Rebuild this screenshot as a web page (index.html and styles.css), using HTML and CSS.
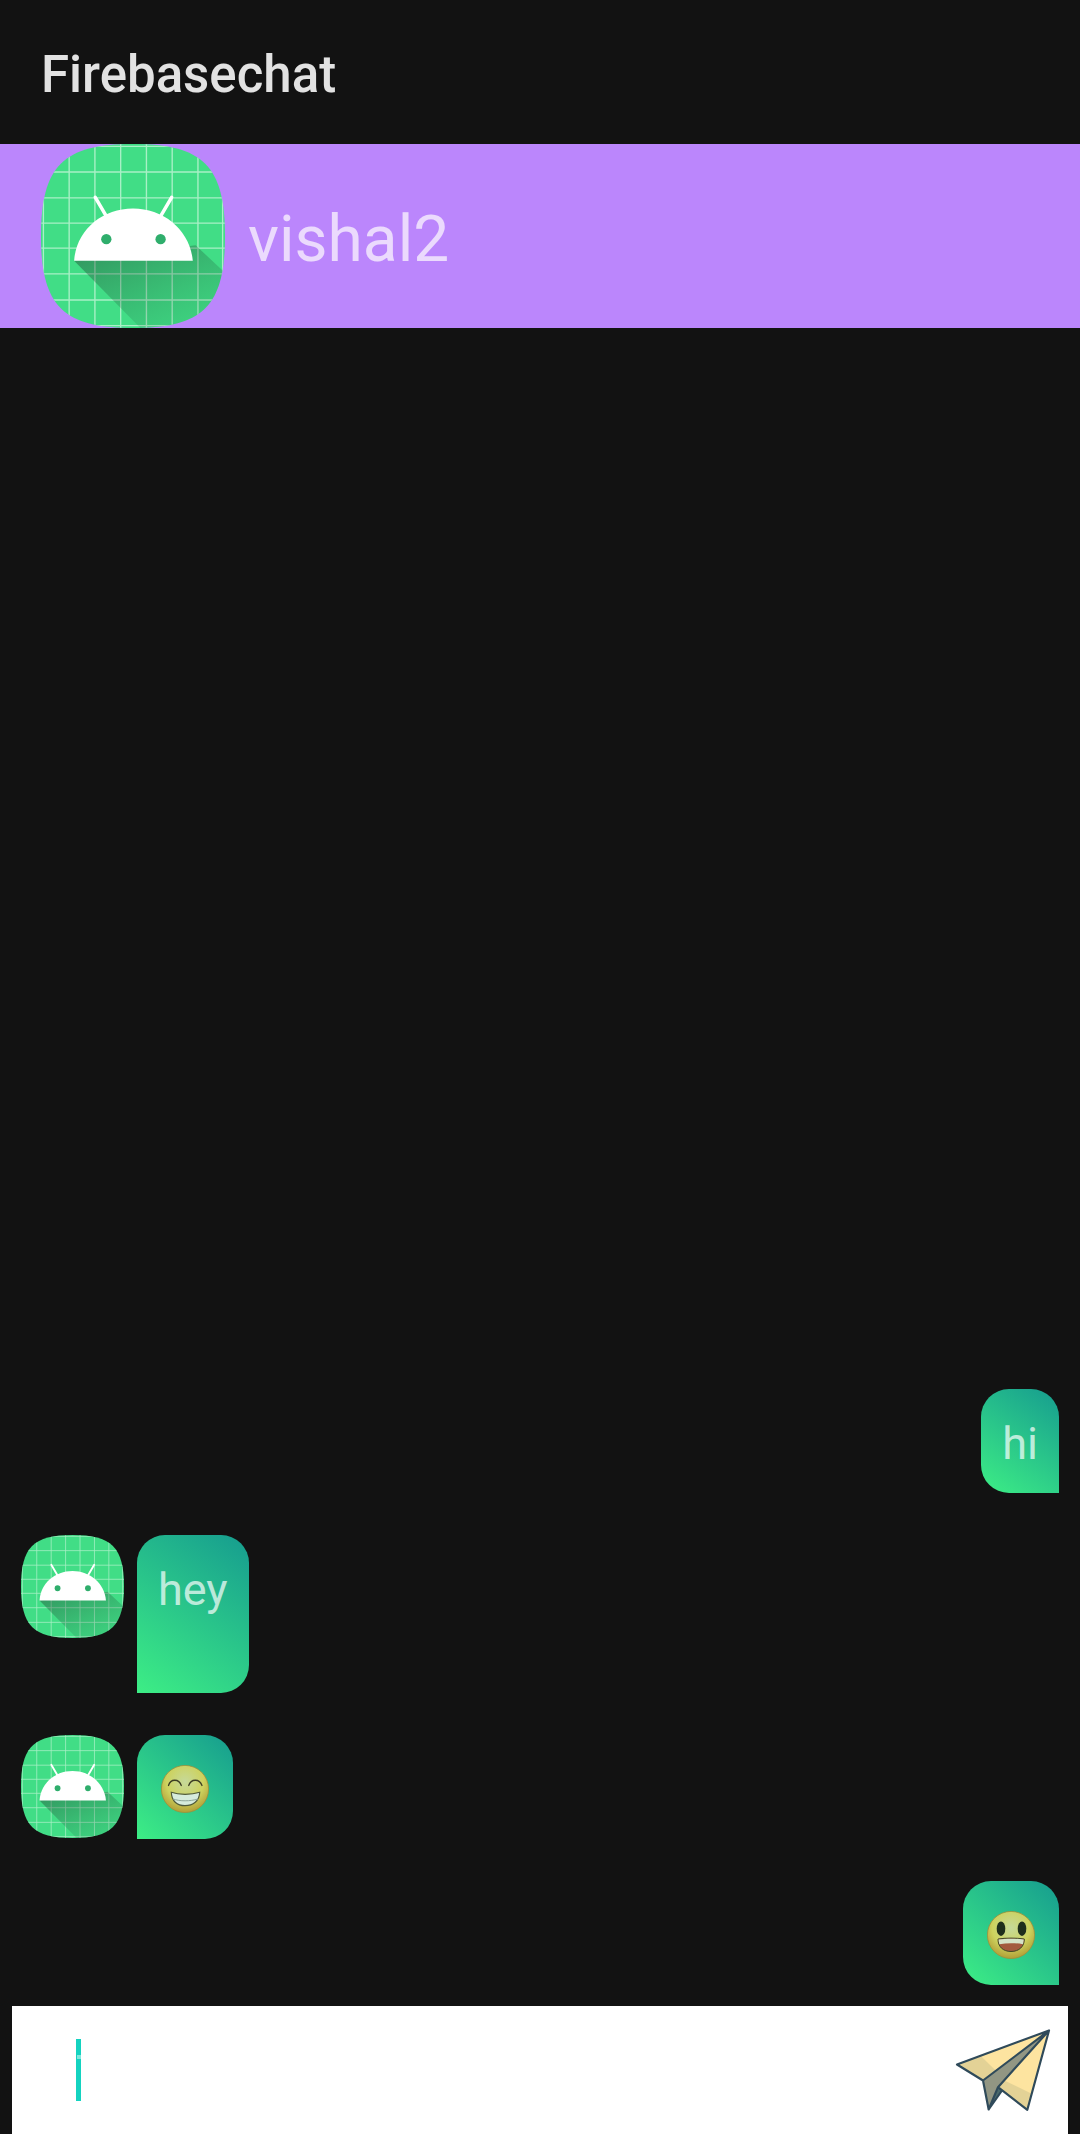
FILE: index.html
```html
<!DOCTYPE html>
<html lang="en">
<head>
<meta charset="utf-8">
<title>Firebasechat</title>
<link rel="stylesheet" href="styles.css">
</head>
<body>
<svg class="defs" width="0" height="0" aria-hidden="true">
  <defs>
    <clipPath id="squircle"><path d="M50 0C88 0 100 12 100 50C100 88 88 100 50 100C12 100 0 88 0 50C0 12 12 0 50 0Z"/></clipPath>
    <linearGradient id="shadow" x1="0.15" y1="0.05" x2="0.85" y2="0.95">
      <stop offset="0" stop-color="#1c2b24" stop-opacity=".38"/>
      <stop offset="1" stop-color="#1c5a3a" stop-opacity=".08"/>
    </linearGradient>
    <radialGradient id="face" cx=".5" cy=".35" r=".66">
      <stop offset="0" stop-color="#c6d99a"/>
      <stop offset=".6" stop-color="#cdd25e"/>
      <stop offset="1" stop-color="#b09c34"/>
    </radialGradient>
    <symbol id="android" viewBox="0 0 100 100">
      <g clip-path="url(#squircle)">
        <rect width="100" height="100" fill="#41dd86"/>
        <g stroke="#a8f0c6" stroke-width=".75" fill="none">
          <path d="M1.3 0V100M15.3 0V100M29.3 0V100M43.3 0V100M57.3 0V100M71.3 0V100M85.3 0V100M98.7 0V100"/>
          <path d="M0 1.3H100M0 15.2H100M0 29.3H100M0 43H100M0 56.6H100M0 70.6H100M0 84.8H100M0 98.7H100"/>
        </g>
        <path d="M18 63.5L54 100H100V70L84 55Z" fill="url(#shadow)"/>
        <path d="M29.5 29L36.5 41M71 29L64 41" stroke="#fff" stroke-width="1.9" stroke-linecap="round"/>
        <path d="M18 63.5C19 47 33 35 50 35C67 35 81 47 82.5 63.5Z" fill="#fff"/>
        <circle cx="35.5" cy="51.7" r="2.8" fill="#2fae6c"/>
        <circle cx="65" cy="51.7" r="2.8" fill="#2fae6c"/>
      </g>
    </symbol>
  </defs>
</svg>

<div class="screen">
  <header class="toolbar">Firebasechat</header>

  <section class="profile">
    <svg class="profile-avatar"><use href="#android"/></svg>
    <span class="profile-name">vishal2</span>
  </section>

  <main class="messages">
    <div class="row row-out">
      <div class="bubble bubble-out">hi</div>
    </div>
    <div class="row">
      <svg class="avatar"><use href="#android"/></svg>
      <div class="bubble bubble-in bubble-tall">hey</div>
    </div>
    <div class="row">
      <svg class="avatar"><use href="#android"/></svg>
      <div class="bubble bubble-in bubble-emoji">
        <svg class="emoji" viewBox="0 0 48 48">
          <circle cx="24" cy="24" r="23.6" fill="url(#face)" stroke="#a08f3a" stroke-width=".8"/>
          <path d="M7.5 20.5C9.5 13.5 18 13.5 20.3 20.5M27.7 20.5C30 13.5 38.5 13.5 41 20.5" fill="none" stroke="#3d3d24" stroke-width="1.3" stroke-linecap="round"/>
          <path d="M10.3 27.3C18 30 30 30 38.7 27.3C38.5 36 32 40.7 24 40.7C16 40.7 10.5 36 10.3 27.3Z" fill="#d6ebdc" stroke="#4f5a3a" stroke-width="1.2"/>
          <path d="M12 34C19 36.4 29 36.4 37 34" fill="none" stroke="#8fa79a" stroke-width="1"/>
        </svg>
      </div>
    </div>
    <div class="row row-out row-last">
      <div class="bubble bubble-out bubble-emoji">
        <svg class="emoji" viewBox="0 0 48 48">
          <circle cx="24" cy="24" r="23.6" fill="url(#face)" stroke="#a08f3a" stroke-width=".8"/>
          <ellipse cx="14" cy="17.7" rx="4.3" ry="7.3" fill="#1f2e1c"/>
          <ellipse cx="35" cy="17.7" rx="4.3" ry="7.3" fill="#1f2e1c"/>
          <path d="M11 28C19 26.8 29 26.8 37.3 28C37.5 35.5 32 40.5 24 40.5C16 40.5 10.8 35.5 11 28Z" fill="#a35a3e" stroke="#3f4a26" stroke-width="1"/>
          <path d="M11.5 28.5C19 27.4 29 27.4 36.8 28.5L36 33.2C28 31.8 20 31.8 12.3 33.2Z" fill="#d5e3c8"/>
        </svg>
      </div>
    </div>
  </main>

  <footer class="composer">
    <span class="caret"></span>
    <svg class="send" viewBox="70 500 300 260">
      <path d="M82 612L358 510L160 660Z" fill="#fde4a0"/>
      <path d="M82 612L155 588L198 630L160 660Z" fill="#e3d296"/>
      <path d="M358 510L293 748L205 680Z" fill="#fde4a0"/>
      <path d="M224 660L303 698L293 748L205 680Z" fill="#e3d296"/>
      <path d="M358 510L160 660L177 747L205 680Z" fill="#929683"/>
      <path d="M177 747L205 680L217 690Z" fill="#4b6a6c"/>
      <path d="M82 612L358 510L293 748L205 680L177 747L160 660ZM160 660L358 510L205 680M205 680L217 690L177 747" fill="none" stroke="#2f4a5a" stroke-width="6.5" stroke-linejoin="round"/>
    </svg>
  </footer>
</div>
</body>
</html>
```
FILE: styles.css
```css
* { box-sizing: border-box; }

html, body {
  margin: 0;
  padding: 0;
  background: #121212;
}

.defs { position: absolute; }

.screen {
  width: 1080px;
  height: 2134px;
  display: flex;
  flex-direction: column;
  overflow: hidden;
  background: #121212;
  font-family: Roboto, "Liberation Sans", sans-serif;
}

.toolbar {
  height: 144px;
  flex: none;
  display: flex;
  align-items: center;
  padding: 4px 0 0 41px;
  font-size: 51px;
  font-weight: 500;
  color: #e2e2e2;
}

.profile {
  height: 184px;
  flex: none;
  display: flex;
  align-items: center;
  gap: 23px;
  padding-left: 41px;
  background: #bb86fc;
}

.profile-avatar {
  width: 184px;
  height: 184px;
}

.profile-name {
  padding-top: 6px;
  font-size: 64px;
  color: #ebdafd;
}

.messages {
  flex: 1;
  display: flex;
  flex-direction: column;
  justify-content: flex-end;
  padding: 0 21px;
}

.row {
  display: flex;
  align-items: flex-start;
  gap: 13px;
  margin-bottom: 42px;
}

.row-out { justify-content: flex-end; }
.row-last { margin-bottom: 21px; }

.avatar {
  width: 103px;
  height: 103px;
  flex: none;
}

.bubble {
  min-height: 104px;
  padding: 27px 21px 22px;
  font-size: 45px;
  line-height: 55px;
  color: rgba(255, 255, 255, .7);
  background: linear-gradient(36deg, #3dee85, #169c8f);
}

.bubble-out { border-radius: 28px 28px 0 28px; }
.bubble-in { border-radius: 28px 28px 28px 0; }
.bubble-tall { min-height: 158px; }

.bubble-emoji {
  width: 96px;
  display: flex;
  align-items: center;
  justify-content: center;
  padding: 4px 0 0;
  background: linear-gradient(43deg, #3dee85, #169c8f);
}

.emoji {
  width: 48px;
  height: 48px;
}

.composer {
  height: 128px;
  flex: none;
  margin: 0 12px;
  display: flex;
  align-items: center;
  justify-content: space-between;
  padding: 0 15px 0 64px;
  background: #fff;
}

.caret {
  position: relative;
  width: 5px;
  height: 62px;
  background: #14d3c0;
}

.caret::after {
  content: "";
  position: absolute;
  top: 16px;
  left: 1px;
  width: 4px;
  height: 4px;
  background: #7fe8dc;
}

.send {
  width: 100px;
  height: 87px;
}
```
